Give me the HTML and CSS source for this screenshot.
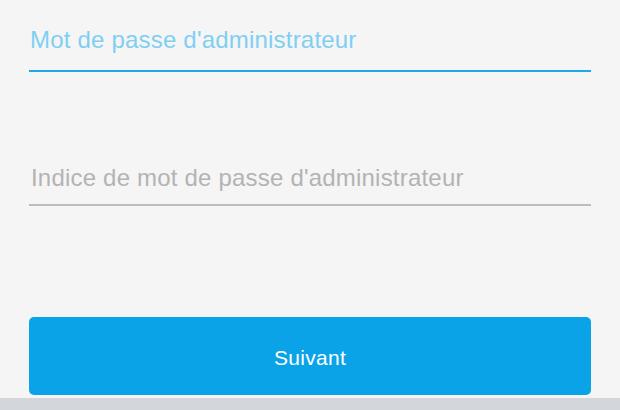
FILE: index.html
```html
<!DOCTYPE html>
<html lang="fr">
<head>
<meta charset="utf-8">
<link rel="stylesheet" href="styles.css">
</head>
<body>
  <main class="form">
    <div class="field field-active">
      <span class="label">Mot de passe d'administrateur</span>
    </div>
    <div class="field field-idle">
      <span class="label">Indice de mot de passe d'administrateur</span>
    </div>
    <button class="btn" type="button">Suivant</button>
  </main>
  <div class="bottom-bar"></div>
</body>
</html>
```
FILE: styles.css
```css
html, body {
  margin: 0;
  padding: 0;
}
body {
  width: 620px;
  height: 410px;
  background: #f5f5f5;
  font-family: "Liberation Sans", Arial, sans-serif;
  display: flex;
  flex-direction: column;
  overflow: hidden;
}
.form {
  flex: 1;
  padding: 0 29px;
  display: flex;
  flex-direction: column;
}
.field {
  display: flex;
  align-items: flex-end;
}
.label {
  font-size: 24px;
  line-height: 28px;
  letter-spacing: 0.2px;
  padding-left: 1px;
}
.field-active {
  padding-top: 26px;
  padding-bottom: 16px;
  border-bottom: 2px solid #1ea8e8;
}
.field-active .label {
  color: #80cff3;
}
.field-idle {
  margin-top: 92px;
  padding-bottom: 12px;
  border-bottom: 2px solid #bdbdbd;
}
.field-idle .label {
  color: #b3b3b3;
  padding-left: 2px;
}
.btn {
  margin-top: 111px;
  height: 78px;
  border: none;
  border-radius: 5px;
  background: #0ba3e8;
  color: #ffffff;
  font-family: inherit;
  font-size: 21px;
  letter-spacing: 0.3px;
  padding: 4px 0 0;
}
.bottom-bar {
  height: 12px;
  background: #d3d6db;
}
```
